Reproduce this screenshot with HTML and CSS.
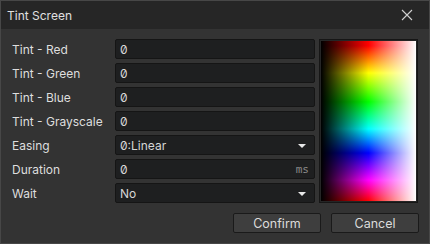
FILE: index.html
```html
<!DOCTYPE html>
<html lang="en">
<head>
    <meta charset="UTF-8">
    <title>Tint Screen</title>
    <link rel="stylesheet" href="styles.css">
</head>
<body>

<div class="janela">
    <!-- Barra de titulo -->
    <div class="titulo">
        <span>Tint Screen</span>
        <svg class="fechar" width="12" height="12" viewBox="0 0 12 12">
            <path d="M1 1 L11 11 M11 1 L1 11" stroke="#d0d0d0" stroke-width="1.1" fill="none"/>
        </svg>
    </div>

    <div class="conteudo">
        <div class="campos">
            <label>Tint - Red</label>
            <div class="campo">0</div>

            <label>Tint - Green</label>
            <div class="campo">0</div>

            <label>Tint - Blue</label>
            <div class="campo">0</div>

            <label>Tint - Grayscale</label>
            <div class="campo">0</div>

            <label>Easing</label>
            <div class="campo lista">0:Linear<span class="seta"></span></div>

            <label>Duration</label>
            <div class="campo">0<span class="unidade">ms</span></div>

            <label>Wait</label>
            <div class="campo lista">No<span class="seta"></span></div>
        </div>

        <div class="paleta"><div class="cores"></div></div>
    </div>

    <div class="botoes">
        <button type="button">Confirm</button>
        <button type="button">Cancel</button>
    </div>
</div>

</body>
</html>
```

FILE: styles.css
```css
body {
    margin: 0;
    padding: 0;
    background-color: #2b2b2b;
    font-family: Inter, "Liberation Sans", sans-serif;
    font-size: 12px;
    color: #dedede;
}

.janela {
    width: 428px;
    height: 242px;
    border: 1px solid #474747;
    background-color: #333333;
    display: flex;
    flex-direction: column;
}

.titulo {
    height: 28px;
    background-color: #262626;
    display: flex;
    align-items: center;
    justify-content: space-between;
    padding: 0 16px 0 6px;
    font-size: 12px;
    color: #e0e0e0;
}

.conteudo {
    display: flex;
    gap: 4px;
    padding: 10px 11px 0 10px;
}

.campos {
    display: grid;
    grid-template-columns: 104px 200px;
    grid-auto-rows: 20px;
    row-gap: 4px;
}

label {
    display: flex;
    align-items: center;
    padding-left: 1px;
    color: #dedede;
}

.campo {
    position: relative;
    background-color: #1e1f20;
    border: 1px solid #151515;
    border-radius: 2px;
    box-sizing: border-box;
    display: flex;
    align-items: center;
    padding-left: 4px;
    color: #d6d6d6;
    font-feature-settings: "zero" 1;
}

.unidade {
    position: absolute;
    right: 5px;
    color: #8a8a8a;
    font-family: "DejaVu Sans Mono", monospace;
    font-size: 11px;
}

.seta {
    position: absolute;
    right: 8px;
    top: 8px;
    width: 0;
    height: 0;
    border-left: 4px solid transparent;
    border-right: 4px solid transparent;
    border-top: 4px solid #e8e8e8;
}

.paleta {
    width: 100px;
    height: 164px;
    box-sizing: border-box;
    border: 1px solid #161616;
    padding: 1px;
    background-color: #252525;
}

.cores {
    width: 100%;
    height: 100%;
    background:
        linear-gradient(to right, #000 0%, rgba(0,0,0,0) 50%, rgba(255,255,255,0) 50%, #fff 100%),
        linear-gradient(to bottom, #f00 3%, #ff0 20%, #0f0 38%, #0ff 55%, #00f 70%, #f0f 87%, #f00 100%);
}

.botoes {
    display: flex;
    justify-content: flex-end;
    gap: 10px;
    padding: 10px 10px 0 0;
}

button {
    width: 88px;
    height: 20px;
    background-color: #3e3e3e;
    border: 1px solid #1a1a1a;
    border-radius: 2px;
    color: #dcdcdc;
    font-family: Inter, "Liberation Sans", sans-serif;
    font-size: 12.5px;
    padding: 0;
}
```
